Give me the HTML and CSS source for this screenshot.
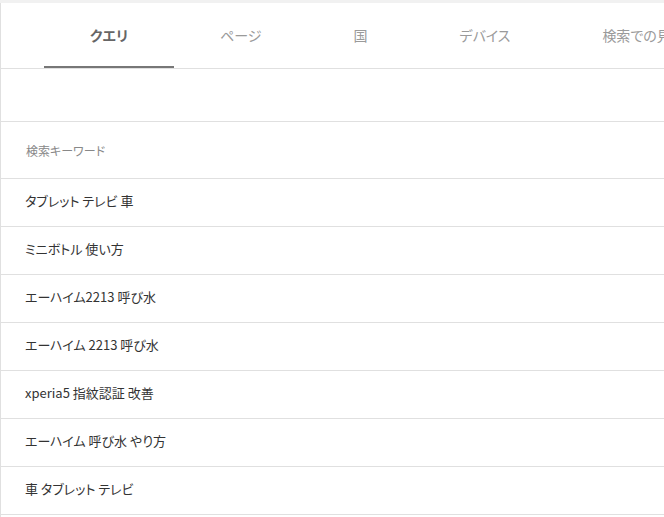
FILE: index.html
```html
<!DOCTYPE html>
<html lang="ja">
<head>
  <meta charset="UTF-8" />
  <meta name="viewport" content="width=device-width, initial-scale=1.0"/>
  <title>検索パフォーマンス</title>
  <link rel="stylesheet" href="styles.css">
</head>
<body>

  <div class="card">
    <div class="tabs">
      <div class="tab active">クエリ</div>
      <div class="tab">ページ</div>
      <div class="tab">国</div>
      <div class="tab">デバイス</div>
      <div class="tab">検索での見え方</div>
    </div>

    <div class="toolbar"></div>

    <table class="queries">
      <thead>
        <tr><th>検索キーワード</th></tr>
      </thead>
      <tbody>
        <tr><td>タブレット テレビ 車</td></tr>
        <tr><td>ミニボトル 使い方</td></tr>
        <tr><td>エーハイム2213 呼び水</td></tr>
        <tr><td>エーハイム 2213 呼び水</td></tr>
        <tr><td>xperia5 指紋認証 改善</td></tr>
        <tr><td>エーハイム 呼び水 やり方</td></tr>
        <tr><td>車 タブレット テレビ</td></tr>
      </tbody>
    </table>
  </div>

</body>
</html>
```

FILE: styles.css
```css
body {
  margin: 0;
  padding-top: 3px;
  background-color: #f1f1f1;
  font-family: "Noto Sans CJK JP", "Noto Sans", sans-serif;
  font-feature-settings: "palt";
  color: #333;
  overflow: hidden;
}

.card {
  background-color: #fff;
  border-left: 1px solid #e0e0e0;
  min-height: 520px;
}

.tabs {
  display: flex;
  height: 65px;
  padding-left: 43px;
  border-bottom: 1px solid #e0e0e0;
  white-space: nowrap;
  overflow: hidden;
}

.tab {
  flex: none;
  display: flex;
  align-items: center;
  padding: 0 46px;
  margin-bottom: -1px;
  border-bottom: 3px solid transparent;
  box-sizing: border-box;
  height: 66px;
  font-size: 14px;
  color: #9a9a9a;
}

.tab.active {
  color: #666;
  font-weight: bold;
  border-bottom-color: #777;
}

.toolbar {
  height: 52px;
  border-bottom: 1px solid #e0e0e0;
}

.queries {
  width: 100%;
  border-collapse: collapse;
}

.queries th {
  height: 56px;
  padding: 0 0 0 25px;
  text-align: left;
  font-size: 12px;
  font-weight: normal;
  color: #888;
  border-bottom: 1px solid #e0e0e0;
}

.queries td {
  height: 48px;
  padding: 0 0 4px 24px;
  box-sizing: border-box;
  font-size: 13px;
  color: #333;
  border-bottom: 1px solid #e0e0e0;
}
```
